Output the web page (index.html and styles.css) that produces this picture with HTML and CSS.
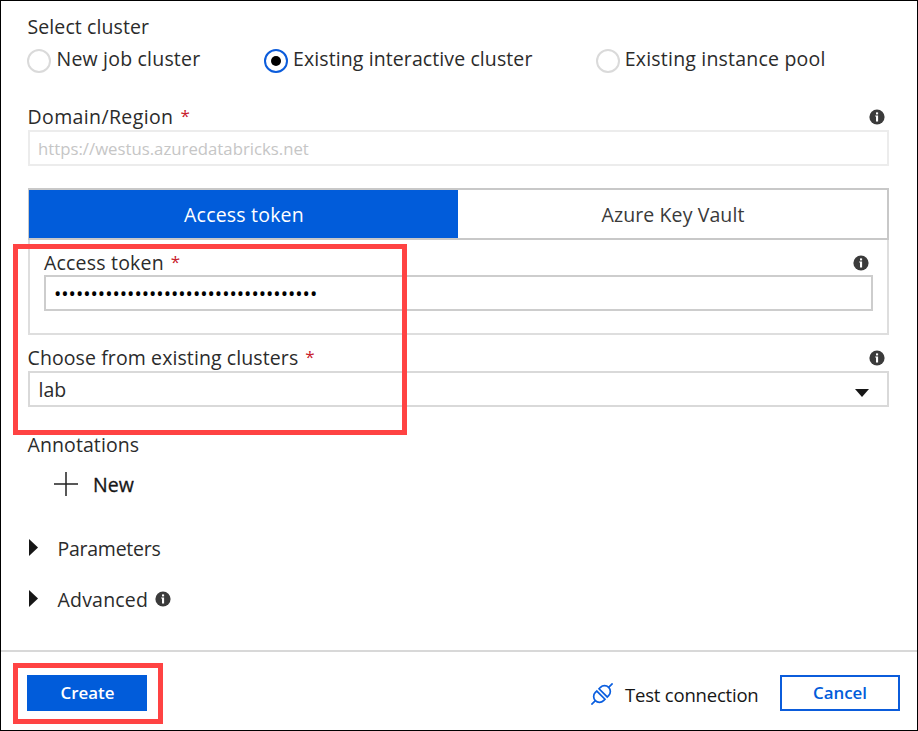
FILE: index.html
```html
<!DOCTYPE html>
<html lang="en">
<head>
<meta charset="utf-8">
<title>Linked service</title>
<link rel="stylesheet" href="styles.css">
</head>
<body>
<svg class="defs" aria-hidden="true">
  <symbol id="info" viewBox="0 0 16 16">
    <circle cx="8" cy="8" r="7.6" fill="#3b3b3b"/>
    <rect x="7" y="3.4" width="2.1" height="2" fill="#fff"/>
    <path d="M6.2 6.5H9.1V12.4H7V7.4H6.2Z" fill="#fff"/>
  </symbol>
</svg>
<div class="frame">
  <main class="form">
    <div class="label first"><span class="ls1">Select cluster</span></div>
    <div class="radios">
      <label class="radio r1"><span class="dot"></span><span class="radio-text ls2">New job cluster</span></label>
      <label class="radio r2"><span class="dot on"></span><span class="radio-text ls1">Existing interactive cluster</span></label>
      <label class="radio r3"><span class="dot"></span><span class="radio-text ls2">Existing instance pool</span></label>
    </div>

    <div class="label domain"><span class="ls4">Domain/Region</span><span class="req">*</span><svg class="info"><use href="#info"/></svg></div>
    <div class="box disabled">https://westus.azuredatabricks.net</div>

    <div class="tabs">
      <div class="tab active ls2">Access token</div>
      <div class="tab ls1">Azure Key Vault</div>
    </div>
    <div class="panel">
      <div class="label"><span class="ls2">Access token</span><span class="req">*</span><svg class="info"><use href="#info"/></svg></div>
      <div class="box token">••••••••••••••••••••••••••••••••••••</div>
    </div>

    <div class="label choose"><span class="ls1">Choose from existing clusters</span><span class="req">*</span><svg class="info"><use href="#info"/></svg></div>
    <div class="box select"><span>lab</span><svg class="caret" viewBox="0 0 14 8"><path d="M0 0H14L7 8Z" fill="#161616"/></svg></div>

    <div class="label annotations"><span class="ls1">Annotations</span></div>
    <div class="new">
      <svg class="plus" viewBox="0 0 24 24"><path d="M12 0V24M0 12H24" stroke="#222" stroke-width="1.5"/></svg>
      <span>New</span>
    </div>

    <div class="expander params"><svg class="arrow" viewBox="0 0 9 17"><path d="M0 0L9 8.5L0 17Z" fill="#161616"/></svg><span class="lsn">Parameters</span></div>
    <div class="expander advanced"><svg class="arrow" viewBox="0 0 9 17"><path d="M0 0L9 8.5L0 17Z" fill="#161616"/></svg><span class="ls2">Advanced</span><svg class="info inline"><use href="#info"/></svg></div>
  </main>
  <footer class="footer">
    <div class="btn primary">Create</div>
    <div class="test">
      <svg class="plug" viewBox="-11 -11 22 22"><g transform="rotate(-45)" fill="none" stroke="#0b5fe0" stroke-width="1.7"><path d="M-1.6 -5.8H-3.6A5.8 5.8 0 0 0 -3.6 5.8H-1.6Z"/><path d="M1.6 -5.8H3.6A5.8 5.8 0 0 1 3.6 5.8H1.6Z"/><path d="M-9.4 0H-15M9.4 0H15"/></g></svg>
      <span>Test connection</span>
    </div>
    <div class="btn outline">Cancel</div>
  </footer>
  <div class="mark mark-fields"></div>
  <div class="mark mark-create"></div>
</div>
</body>
</html>
```
FILE: styles.css
```css
* { box-sizing: border-box; }
body {
  margin: 0;
  background: #fff;
  color: #2b2b2b;
  font-family: "Open Sans", "Noto Sans", sans-serif;
  font-size: 19.5px;
}
.defs { display: none; }
.frame {
  position: relative;
  width: 918px;
  height: 731px;
  border: 1px solid #000;
  display: flex;
  flex-direction: column;
}
.form { height: 649px; padding: 13px 28px 0 27px; }

.label { display: flex; align-items: center; height: 26px; line-height: 26px; white-space: nowrap; margin-left: -0.5px; }
.label.domain { height: 27px; line-height: 27px; margin-top: 27px; }
.label.choose { height: 27px; line-height: 27px; margin-top: 9px; }
.label.annotations { height: 27px; line-height: 27px; margin-top: 24px; margin-left: -0.5px; }
.panel .label { height: 27px; margin: 0 0 -1px 0; line-height: 27px; }
.req { color: #c8202c; font-size: 17px; line-height: 20px; margin: 0 0 2px 7px; }
.info { width: 16px; height: 16px; flex: none; margin: 1px 4px 0 auto; }

.ls1 { letter-spacing: 0.1px; }
.ls2 { letter-spacing: 0.2px; }
.ls4 { letter-spacing: 0.38px; }
.lsn { letter-spacing: -0.25px; }

.radios { display: flex; height: 30px; margin: 6px 0 0 -1px; }
.radio { display: flex; align-items: center; flex: none; gap: 5.5px; white-space: nowrap; }
.r1 { width: 237px; }
.r2 { width: 332px; gap: 5px; }
.r3 { gap: 4.8px; }
.radio-text { line-height: 24px; margin-bottom: 4px; }
.dot { width: 24px; height: 24px; border-radius: 50%; border: 2px solid #dadada; display: flex; align-items: center; justify-content: center; }
.dot.on { border-color: #0b5cdb; }
.dot.on::after { content: ""; width: 10px; height: 10px; border-radius: 50%; background: #000; }

.box { display: flex; align-items: center; height: 36px; border: 2px solid #cdcdcd; line-height: 24px; white-space: nowrap; }
.box.disabled { border-color: #ececec; color: #c6c6c6; font-size: 16.75px; padding: 1px 0 0 8px; }
.box.token { color: #000; padding-left: 8px; padding-top: 2px; letter-spacing: -0.02px; }
.box.select { border-color: #d9d9d9; padding: 1px 18px 0 8.5px; justify-content: space-between; }
.caret { width: 14px; height: 8px; margin-top: 7px; }

.tabs { display: flex; height: 52px; margin-top: 22px; border: 2px solid #c8c8c8; border-left-width: 1px; }
.tab { flex: 1; padding-left: 1px; text-align: center; line-height: 49px; color: #3a3a3a; }
.tab.active { background: #015cda; color: #fff; }
.panel { height: 95px; padding: 9px 14px 0; border: 2px solid #dedede; border-top: 0; }

.new { display: flex; align-items: center; height: 25px; line-height: 25px; margin: 14px 0 0 26px; color: #161616; -webkit-text-stroke: 0.3px #161616; }
.plus { width: 24px; height: 24px; margin: 0 15px 1px 0; }
.expander { display: flex; align-items: center; height: 26px; line-height: 26px; padding-left: 1px; }
.params { margin-top: 39px; }
.advanced { margin-top: 25px; }
.arrow { width: 9px; height: 17px; margin: 0 19.5px 3px 0; }
.info.inline { margin: 0 0 3px 7px; }

.footer { display: flex; flex: 1; align-items: flex-start; border-top: 2px solid #d8d8d8; padding: 23px 17px 0 26px; }
.btn { width: 120px; height: 36px; text-align: center; font-size: 16.9px; font-weight: 600; line-height: 36px; }
.primary { background: #015cda; color: #fff; padding-left: 1px; }
.outline { border: 2px solid #0b5cdb; color: #015cda; line-height: 32px; }
.test { display: flex; align-items: center; height: 36px; margin: 0 21.5px 0 auto; color: #161616; font-size: 18.5px; letter-spacing: -0.2px; }
.test span { line-height: 24px; margin-top: 3px; }
.plug { width: 22px; height: 22px; margin: 1px 12px 0 0; }

.mark { position: absolute; border: 5px solid #ff4343; }
.mark-fields { left: 12px; top: 243px; width: 394px; height: 191px; }
.mark-create { left: 12px; top: 662px; width: 150px; height: 61px; }
```
